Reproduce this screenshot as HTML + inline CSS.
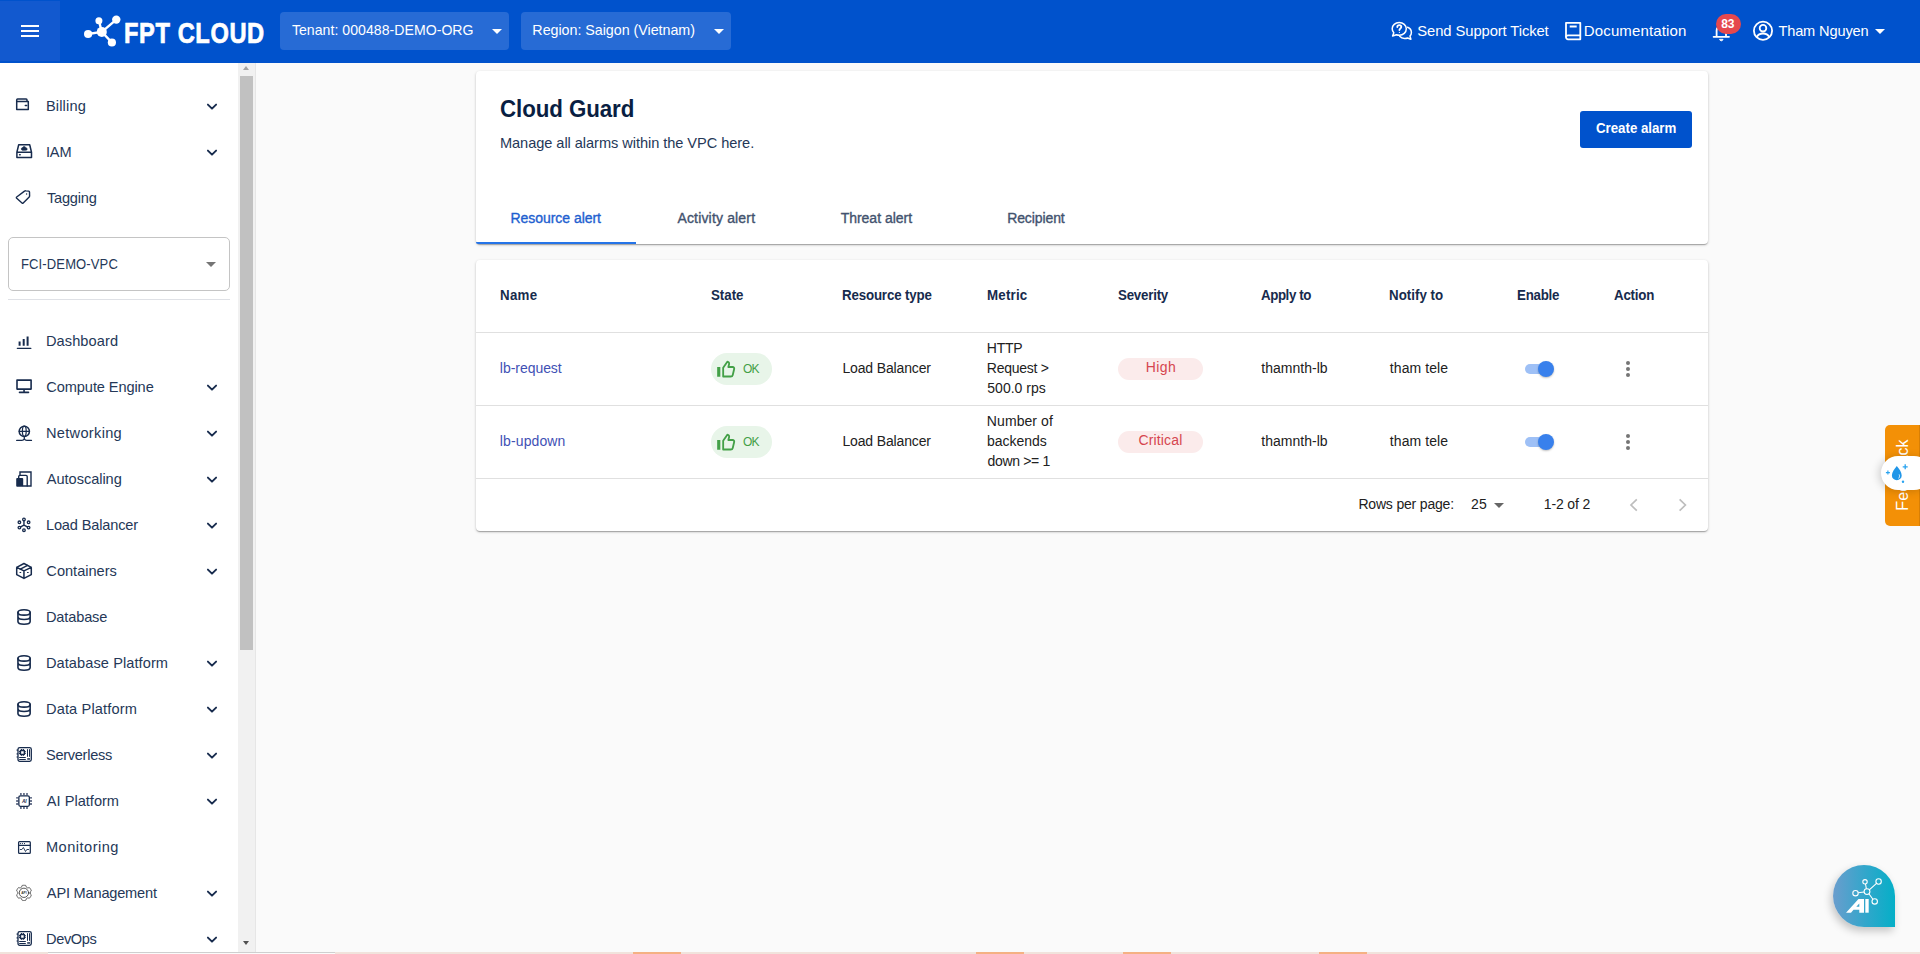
<!DOCTYPE html>
<html lang="en">
<head>
<meta charset="utf-8">
<title>Cloud Guard - FPT Cloud</title>
<style>
*{box-sizing:border-box;margin:0;padding:0}
html,body{width:1920px;height:954px;overflow:hidden;background:#fafafa;font-family:"Liberation Sans",sans-serif;color:#172b4d}
body{position:relative}
.abs{position:absolute}
.t{position:absolute;white-space:nowrap}
/* header */
#hdr{position:absolute;left:0;top:0;width:1920px;height:63px;background:#0052cc;color:#fff}
#burger{position:absolute;left:0;top:1px;width:60px;height:60px;background:#1259cf}
#burger i{position:absolute;left:21px;width:18px;height:2px;background:#fff}
.hsel{position:absolute;top:12px;height:38px;background:#276bd5;border-radius:4px}
.tri{position:absolute;width:0;height:0;border-left:5px solid transparent;border-right:5px solid transparent;border-top:5px solid #fff}
.ht{top:18px;line-height:24px;font-size:14.6px;color:#fff}
/* sidebar */
#side{position:absolute;left:0;top:63px;width:238px;height:891px;background:#fff}
.st{left:46px;font-size:14.6px;line-height:24px;color:#253858}
svg.ic{position:absolute;left:12px;width:24px;height:24px;fill:none;stroke:#172b4d;stroke-width:1.6;stroke-linecap:round;stroke-linejoin:round}
svg.ch{position:absolute;left:205px;width:14px;height:10px;fill:none;stroke:#172b4d;stroke-width:1.9;stroke-linecap:round;stroke-linejoin:round}
#sbar{position:absolute;left:238px;top:63px;width:17px;height:891px;background:#f1f1f1}
#sbar .th{position:absolute;left:2px;top:13px;width:13px;height:574px;background:#c1c1c1}
#sbar .up{position:absolute;left:4.9px;top:3px;width:0;height:0;border-left:3.6px solid transparent;border-right:3.6px solid transparent;border-bottom:4px solid #a3a3a3}
#sbar .dn{position:absolute;left:4.9px;bottom:9px;width:0;height:0;border-left:3.6px solid transparent;border-right:3.6px solid transparent;border-top:4.2px solid #505050}
/* cards */
.card{position:absolute;left:476px;width:1232px;background:#fff;border-radius:4px;box-shadow:0 1px 3px rgba(0,0,0,.2),0 1px 1px rgba(0,0,0,.14),0 2px 1px -1px rgba(0,0,0,.12)}
.tab{font-size:14px;line-height:20px;color:#42526e;-webkit-text-stroke:.35px #42526e}
.hd{font-size:14px;font-weight:bold;color:#172b4d;line-height:20px;transform:scaleX(.95);transform-origin:0 50%}
.c{font-size:14px;color:#212121;line-height:20px}
.lk{color:#3f51b5}
.ok{position:absolute;left:711px;width:61px;height:32px;border-radius:16px;background:#e8f5e9}
.ok svg{position:absolute;left:5px;top:6px;width:20px;height:20px}
.okt{font-size:12px;line-height:20px;color:#43a047}
.sev{position:absolute;left:1118px;width:85px;height:22px;border-radius:11px;background:#fbebeb}
.sevt{font-size:14px;line-height:20px;color:#d6454f}
.sw{position:absolute;left:1525px;width:28px;height:10px;border-radius:5px;background:#9ec0f6}
.sw i{position:absolute;left:13px;top:-3.5px;width:16.2px;height:16.2px;border-radius:9px;background:#3880ec;box-shadow:0 1px 2px rgba(0,0,0,.25)}
.dots{position:absolute;left:1626px;width:4px}
.dots i{display:block;width:4px;height:4px;border-radius:2px;background:#757575;margin-bottom:2.2px}
.line{position:absolute;left:476px;width:1232px;height:1px;background:#e0e0e0}
#hlogo{left:124.12px;letter-spacing:0.743px}
#htenant{left:291.88px;letter-spacing:0.033px}
#hregion{left:532.35px;letter-spacing:-0.037px}
#hsupport{left:1417.37px;letter-spacing:-0.106px}
#hdoc{left:1583.82px;letter-spacing:0.131px}
#hbadge{left:1721.20px;letter-spacing:0.000px}
#huser{left:1778.39px;letter-spacing:-0.137px}
#s0{left:45.94px;letter-spacing:0.152px}
#s1{left:45.89px;letter-spacing:-0.141px}
#s2{left:46.88px;letter-spacing:-0.202px}
#s3{left:45.94px;letter-spacing:0.092px}
#s4{left:46.35px;letter-spacing:-0.101px}
#s5{left:45.94px;letter-spacing:0.310px}
#s6{left:46.87px;letter-spacing:-0.054px}
#s7{left:45.94px;letter-spacing:-0.162px}
#s8{left:46.35px;letter-spacing:-0.003px}
#s9{left:45.94px;letter-spacing:-0.147px}
#s10{left:45.94px;letter-spacing:0.074px}
#s11{left:45.94px;letter-spacing:0.151px}
#s12{left:45.97px;letter-spacing:-0.294px}
#s13{left:46.87px;letter-spacing:-0.001px}
#s14{left:45.94px;letter-spacing:0.481px}
#s15{left:46.87px;letter-spacing:-0.206px}
#s16{left:45.94px;letter-spacing:-0.347px}
#svpc{left:21.32px;letter-spacing:0.132px}
#mtitle{left:499.59px;letter-spacing:-0.087px}
#msub{left:499.94px;letter-spacing:-0.055px}
#mbtn{left:1595.60px;letter-spacing:-0.025px}
#tab0{left:510.39px;letter-spacing:-0.033px}
#tab1{left:677.46px;letter-spacing:0.163px}
#tab2{left:840.64px;letter-spacing:-0.012px}
#tab3{left:1007.18px;letter-spacing:-0.100px}
#th0{left:500.06px;letter-spacing:0.317px}
#th1{left:711.46px;letter-spacing:-0.014px}
#th2{left:842.41px;letter-spacing:-0.164px}
#th3{left:987.41px;letter-spacing:0.221px}
#th4{left:1118.46px;letter-spacing:-0.226px}
#th5{left:1260.53px;letter-spacing:-0.437px}
#th6{left:1389.41px;letter-spacing:0.036px}
#th7{left:1517.41px;letter-spacing:-0.254px}
#th8{left:1613.53px;letter-spacing:-0.205px}
#r0n{left:499.85px;letter-spacing:-0.042px}
#r0ok{left:742.93px;letter-spacing:-0.802px}
#r0t{left:842.39px;letter-spacing:-0.136px}
#r0m0{left:986.87px;letter-spacing:-0.266px}
#r0m1{left:986.87px;letter-spacing:-0.256px}
#r0m2{left:987.31px;letter-spacing:0.017px}
#r0s{left:1145.87px;letter-spacing:0.344px}
#r0a{left:1261.36px;letter-spacing:0.004px}
#r0y{left:1389.87px;letter-spacing:0.063px}
#r1n{left:499.85px;letter-spacing:0.117px}
#r1ok{left:742.93px;letter-spacing:-0.802px}
#r1t{left:842.39px;letter-spacing:-0.136px}
#r1m0{left:986.87px;letter-spacing:0.076px}
#r1m1{left:987.11px;letter-spacing:-0.033px}
#r1m2{left:987.60px;letter-spacing:-0.344px}
#r1s{left:1138.41px;letter-spacing:0.155px}
#r1a{left:1261.36px;letter-spacing:0.004px}
#r1y{left:1389.87px;letter-spacing:0.063px}
#f0{left:1358.42px;letter-spacing:-0.183px}
#f1{left:1471.11px;letter-spacing:-0.003px}
#f2{left:1543.87px;letter-spacing:-0.166px}
</style>
</head>
<body>
<div id="hdr">
<div id="burger"><i style="top:24px"></i><i style="top:29px"></i><i style="top:34px"></i></div>
<svg class="abs" style="left:80px;top:10px" width="44" height="42" viewBox="0 0 44 42">
<g stroke="#fff" stroke-width="2.400" fill="none" stroke-linecap="round"><path d="M8.100 24 L21.800 21.900 M21.800 21.900 L18.900 10.800 M21.800 21.900 L36.300 9.600 M21.800 21.900 L31.900 32.500"/></g>
<g fill="#fff"><circle cx="8.100" cy="24" r="4.100"/><circle cx="21.800" cy="21.900" r="5"/><circle cx="18.900" cy="10.800" r="3.500"/><circle cx="36.300" cy="9.600" r="4.200"/><circle cx="31.900" cy="32.500" r="4.100"/></g>
</svg>
<div class="t " id="hlogo" style="top:14.9px;line-height:36px;font-size:29.6px;font-weight:bold;color:#fff;-webkit-text-stroke:.7px #fff;transform:scaleX(.8);transform-origin:0 50%">FPT CLOUD</div>
<div class="hsel" style="left:280px;width:229px"></div><div class="tri" style="left:492px;top:29px"></div>
<div class="hsel" style="left:521px;width:210px"></div><div class="tri" style="left:714px;top:29px"></div>
<div class="t ht" id="htenant" style="top:18px;line-height:24px;font-size:14.1px">Tenant: 000488-DEMO-ORG</div>
<div class="t ht" id="hregion" style="top:18px;line-height:24px;font-size:14.3px">Region: Saigon (Vietnam)</div>
<svg class="abs" style="left:1389px;top:19px" width="26" height="24" viewBox="0 0 26 24" fill="none" stroke="#fff" stroke-width="1.5" stroke-linecap="round" stroke-linejoin="round">
<path d="M10.2 3.6 c-4 0 -7 2.7 -7 6.1 c0 1.5 .6 2.9 1.600 4 l-1.2 3.300 l3.800 -1.300 c.9 .3 1.800 .5 2.800 .5 c4 0 7.100 -2.800 7.100 -6.400 c0 -3.500 -3.100 -6.200 -7.100 -6.200z"/>
<path d="M18.6 8.300 c2.300 .9 3.800 2.900 3.800 5.200 c0 1.400 -.5 2.600 -1.400 3.600 l.9 3.100 l-3.300 -1.200 c-1 .4 -2 .6 -3.100 .5 c-2 -.1 -3.700 -1 -4.800 -2.300"/>
<path d="M8.300 8.100 c0 -1.100 .9 -1.900 2 -1.900 s2 .8 2 1.900 c0 1.300 -1.900 1.500 -1.900 3" stroke-width="1.800"/><circle cx="10.4" cy="13.300" r=".6" fill="#fff" stroke="none"/>
</svg>
<div class="t ht" id="hsupport" style="top:18.6px;line-height:24px;font-size:14.8px">Send Support Ticket</div>
<svg class="abs" style="left:1563px;top:20px" width="20" height="22" viewBox="0 0 20 22" fill="none" stroke="#fff" stroke-width="1.8" stroke-linejoin="round">
<path d="M3 2.800 h14.300 v16.500 h-12.300 a2 2 0 0 1 -2 -2z"/><path d="M3 17.300 a2 2 0 0 1 2 -2 h12.300" /><path d="M6.700 6.500 h7" stroke-width="2"/></svg>
<div class="t ht" id="hdoc" style="top:18.6px;line-height:24px;font-size:15px">Documentation</div>
<svg class="abs" style="left:1711px;top:21px" width="22" height="22" viewBox="0 0 22 22" fill="none" stroke="#fff" stroke-width="1.8" stroke-linejoin="round" stroke-linecap="round">
<path d="M5.600 15.500 V9.500 a4.700 4.700 0 0 1 9.400 0 V15.500 M2.600 15.800 H18"/><path d="M8.700 18.700 a1.700 1.700 0 0 0 3.200 0z" fill="#fff" stroke-width="1"/></svg>
<div class="abs" style="left:1715.5px;top:14px;width:25px;height:20px;border-radius:10px;background:#e5484d"></div>
<div class="t " id="hbadge" style="top:14px;line-height:20px;font-size:12px;font-weight:bold;color:#fff">83</div>
<svg class="abs" style="left:1751px;top:19px" width="24" height="24" viewBox="0 0 24 24" fill="none" stroke="#fff" stroke-width="1.8">
<circle cx="12" cy="11.700" r="9.100"/><circle cx="12" cy="9.200" r="3.300"/><path d="M5.700 18.200 c1.300 -2.600 3.600 -3.700 6.300 -3.700 s5 1.100 6.300 3.700"/></svg>
<div class="t ht" id="huser" style="top:18.6px;line-height:24px;font-size:14.6px">Tham Nguyen</div>
<div class="tri" style="left:1875px;top:29px"></div>
</div>
<div id="side"></div>
<div id="sbar"><div class="up"></div><div class="th"></div><div class="dn"></div></div>
<div class="abs" style="left:255px;top:63px;width:1px;height:891px;background:#e6e6e6"></div>
<svg class="ic" style="top:94px" viewBox="0 0 24 24"><path d="M4.7 7.600 h11.600 v7.800 h-11.600z M4.700 7.600 v-1.700 q0 -.9 .9 -.9 h8.500 q.9 0 .9 .9 v1.700" stroke-width="1.500"/><path d="M13.300 11.500 h1.400" stroke-width="1.500"/></svg>
<div class="t st" id="s0" style="top:94px;line-height:24px">Billing</div>
<svg class="ch" style="top:101.6px" viewBox="0 0 14 10"><path d="M2.900 2.600 L7 6.700 L11.100 2.600"/></svg>
<svg class="ic" style="top:140px" viewBox="0 0 24 24"><path d="M6.700 4.800 h11 l1.800 7.400 v5.200 h-14.600 v-5.200z M5 12.200 h14.400" stroke-width="1.500"/><path d="M10.200 10.300 a1.400 1.400 0 0 1 .3 -2.700 a1.900 1.900 0 0 1 3.500 .3 a1.200 1.200 0 0 1 0 2.400z" fill="#172b4d" stroke-width=".6"/><path d="M7.600 14.800 h.6" stroke-width="1.400"/></svg>
<div class="t st" id="s1" style="top:140px;line-height:24px">IAM</div>
<svg class="ch" style="top:147.6px" viewBox="0 0 14 10"><path d="M2.900 2.600 L7 6.700 L11.100 2.600"/></svg>
<svg class="ic" style="top:186px" viewBox="0 0 24 24"><path d="M4.700 11 L12.500 5.100 q.5 -.4 1.200 -.3 l3 .3 q.8 .1 .8 .9 l.1 4 q0 .6 -.4 1 L11.200 17 q-.6 .6 -1.200 0 L4.700 12.300 q-.7 -.7 0 -1.300z" stroke-width="1.400"/><circle cx="14.600" cy="8" r=".7" fill="#172b4d" stroke="none"/></svg>
<div class="t st" id="s2" style="top:186px;line-height:24px">Tagging</div>
<svg class="ic" style="top:329px" viewBox="0 0 24 24"><path d="M7.600 12.500 V16.700 M11.700 10 V16.700 M15.600 7.400 V16.700" stroke-width="2" stroke-linecap="butt"/><path d="M5.300 19.300 H18.900" stroke-width="1.200"/></svg>
<div class="t st" id="s3" style="top:329px;line-height:24px">Dashboard</div>
<svg class="ic" style="top:375px" viewBox="0 0 24 24"><path d="M5 5.100 h14.100 v9 h-14.100z M12.050 14.100 v3.100 M7.500 17.400 h9" stroke-width="1.600"/></svg>
<div class="t st" id="s4" style="top:375px;line-height:24px">Compute Engine</div>
<svg class="ch" style="top:382.6px" viewBox="0 0 14 10"><path d="M2.900 2.600 L7 6.700 L11.100 2.600"/></svg>
<svg class="ic" style="top:421px" viewBox="0 0 24 24"><circle cx="12.300" cy="10.300" r="5.150" stroke-width="1.500"/><ellipse cx="12.300" cy="10.300" rx="1.900" ry="5.100" stroke-width="1.250"/><path d="M7.200 10.300 h10.200" stroke-width="1.250"/><path d="M12.300 15.700 V17.700 M4.700 19.450 H9.800 Q11.600 19.450 12.300 17.700 Q13 19.450 14.800 19.450 H19.500" stroke-width="1.300"/></svg>
<div class="t st" id="s5" style="top:421px;line-height:24px">Networking</div>
<svg class="ch" style="top:428.6px" viewBox="0 0 14 10"><path d="M2.900 2.600 L7 6.700 L11.100 2.600"/></svg>
<svg class="ic" style="top:467px" viewBox="0 0 24 24"><rect x="4.200" y="11" width="7" height="8.700" rx=".9" fill="#172b4d" stroke="none"/><path d="M8 7.900 V5 H19 V19 H11" stroke-width="1.400" stroke-linejoin="miter"/><path d="M6.700 11 V9.600 Q6.700 8.400 7.900 8.400 H14 Q15.200 8.400 15.200 9.600 V19" stroke-width="1.400"/></svg>
<div class="t st" id="s6" style="top:467px;line-height:24px">Autoscaling</div>
<svg class="ch" style="top:474.6px" viewBox="0 0 14 10"><path d="M2.900 2.600 L7 6.700 L11.100 2.600"/></svg>
<svg class="ic" style="top:513px" viewBox="0 0 24 24"><g stroke-width="1.300"><circle cx="11.950" cy="6.500" r="1.300"/><circle cx="11.950" cy="17.200" r="1.300"/><circle cx="7.400" cy="9.300" r="1.300"/><circle cx="16.600" cy="9.300" r="1.300"/><circle cx="7.400" cy="14.600" r="1.300"/><circle cx="16.600" cy="14.600" r="1.300"/><path d="M11.950 7.900 V12.100 M11.950 12.100 L8.600 13.900 M11.950 12.100 L15.300 13.900" stroke-width="1.400"/></g></svg>
<div class="t st" id="s7" style="top:513px;line-height:24px">Load Balancer</div>
<svg class="ch" style="top:520.6px" viewBox="0 0 14 10"><path d="M2.900 2.600 L7 6.700 L11.100 2.600"/></svg>
<svg class="ic" style="top:559px" viewBox="0 0 24 24"><path d="M11.950 4.500 L19.300 8.300 V15.600 L11.950 19.400 L4.700 15.600 V8.300z M4.700 8.300 L11.950 11.900 L19.300 8.300 M11.950 11.900 V19.400" stroke-width="1.500"/><path d="M15.600 6.400 L8.300 10.100" stroke-width="1.400"/><path d="M8 13.500 h.7 M15.500 13.500 h.7" stroke-width="1.200"/></svg>
<div class="t st" id="s8" style="top:559px;line-height:24px">Containers</div>
<svg class="ch" style="top:566.6px" viewBox="0 0 14 10"><path d="M2.900 2.600 L7 6.700 L11.100 2.600"/></svg>
<svg class="ic" style="top:605px" viewBox="0 0 24 24"><ellipse cx="12.050" cy="7.400" rx="6.100" ry="2.700" stroke-width="1.600"/><path d="M5.950 7.400 V16.500 c0 1.500 2.700 2.700 6.100 2.700 s6.100 -1.200 6.100 -2.700 V7.400 M5.950 11.800 c0 1.500 2.700 2.700 6.100 2.700 s6.100 -1.200 6.100 -2.700" stroke-width="1.600"/></svg>
<div class="t st" id="s9" style="top:605px;line-height:24px">Database</div>
<svg class="ic" style="top:651px" viewBox="0 0 24 24"><ellipse cx="12.050" cy="7.400" rx="6.100" ry="2.700" stroke-width="1.600"/><path d="M5.950 7.400 V16.500 c0 1.500 2.700 2.700 6.100 2.700 s6.100 -1.200 6.100 -2.700 V7.400 M5.950 11.800 c0 1.500 2.700 2.700 6.100 2.700 s6.100 -1.200 6.100 -2.700" stroke-width="1.600"/></svg>
<div class="t st" id="s10" style="top:651px;line-height:24px">Database Platform</div>
<svg class="ch" style="top:658.6px" viewBox="0 0 14 10"><path d="M2.900 2.600 L7 6.700 L11.100 2.600"/></svg>
<svg class="ic" style="top:697px" viewBox="0 0 24 24"><ellipse cx="12.050" cy="7.400" rx="6.100" ry="2.700" stroke-width="1.600"/><path d="M5.950 7.400 V16.500 c0 1.500 2.700 2.700 6.100 2.700 s6.100 -1.200 6.100 -2.700 V7.400 M5.950 11.800 c0 1.500 2.700 2.700 6.100 2.700 s6.100 -1.200 6.100 -2.700" stroke-width="1.600"/></svg>
<div class="t st" id="s11" style="top:697px;line-height:24px">Data Platform</div>
<svg class="ch" style="top:704.6px" viewBox="0 0 14 10"><path d="M2.900 2.600 L7 6.700 L11.100 2.600"/></svg>
<svg class="ic" style="top:743px" viewBox="0 0 24 24"><rect x="6" y="4.600" width="13.300" height="13.700" rx="1.700" stroke-width="1.300"/><path d="M4.700 7.200 h1 M4.700 10.900 h1 M4.700 14 h1" stroke-width="1.700" stroke-linecap="butt"/><rect x="8.400" y="7.400" width="4" height="4" rx=".5" stroke-width="1.500"/><path d="M9.500 6.100 v1 M11.400 6.100 v1 M9.500 11.700 v1 M11.400 11.700 v1 M7.100 8.500 h1 M7.100 10.400 h1 M12.700 8.500 h1 M12.700 10.400 h1" stroke-width="1.100" stroke-linecap="butt"/><path d="M15.500 6.600 v6.800 M17.500 6.600 v6.800 M7.600 14.500 h5.800 M7.600 16.500 h5.800" stroke-width="1"/><path d="M15.200 15.950 h2.800" stroke-width="1.500" stroke-linecap="butt"/></svg>
<div class="t st" id="s12" style="top:743px;line-height:24px">Serverless</div>
<svg class="ch" style="top:750.6px" viewBox="0 0 14 10"><path d="M2.900 2.600 L7 6.700 L11.100 2.600"/></svg>
<svg class="ic" style="top:789px" viewBox="0 0 24 24"><rect x="6.850" y="6.850" width="10.500" height="10.500" rx="1.500" stroke-width="1.300"/><path d="M8.900 4.100 v2.100 M11.950 4.100 v2.100 M15 4.100 v2.100 M8.900 18 v2 M11.950 18 v2 M15 18 v2 M4.100 8.900 h2.100 M4.100 11.950 h2.100 M4.100 15 h2.100 M18 8.900 h2 M18 11.950 h2 M18 15 h2" stroke-width="1.400" stroke-linecap="butt" stroke="#3d4a6b"/><text x="12.300" y="13.800" font-size="4.800" font-weight="bold" font-style="italic" text-anchor="middle" fill="#172b4d" stroke="none" font-family="Liberation Sans, sans-serif">AI</text></svg>
<div class="t st" id="s13" style="top:789px;line-height:24px">AI Platform</div>
<svg class="ch" style="top:796.6px" viewBox="0 0 14 10"><path d="M2.900 2.600 L7 6.700 L11.100 2.600"/></svg>
<svg class="ic" style="top:835px" viewBox="0 0 24 24"><rect x="6.600" y="6.500" width="11.700" height="11.800" rx=".9" stroke-width="1.250"/><path d="M6.600 10.300 h11.700" stroke-width="1.200"/><path d="M8.300 8.550 h.2 M10.300 8.550 h.2 M12.400 8.550 h.2" stroke-width="1"/><path d="M8.300 14.500 h1.600 l1.500 -2 l2.100 4 l1.300 -2 h1.800" stroke-width=".9"/></svg>
<div class="t st" id="s14" style="top:835px;line-height:24px">Monitoring</div>
<svg class="ic" style="top:881px" viewBox="0 0 24 24"><g stroke="#3a3a3a" stroke-width=".85"><path d="M18.14 11.90 L18.14 11.68 L18.13 11.47 L18.13 11.25 L18.17 11.03 L18.36 10.77 L18.81 10.44 L19.17 10.10 L19.24 9.81 L19.19 9.55 L19.11 9.29 L19.01 9.05 L18.91 8.80 L18.80 8.56 L18.68 8.32 L18.55 8.09 L18.41 7.86 L18.27 7.64 L18.11 7.42 L17.95 7.21 L17.79 7.00 L17.61 6.81 L17.40 6.63 L17.12 6.55 L16.65 6.69 L16.14 6.91 L15.82 6.95 L15.60 6.87 L15.41 6.76 L15.23 6.65 L15.04 6.54 L14.86 6.44 L14.67 6.33 L14.48 6.22 L14.30 6.07 L14.18 5.78 L14.12 5.23 L14.00 4.75 L13.78 4.54 L13.53 4.45 L13.27 4.40 L13.01 4.35 L12.75 4.32 L12.48 4.30 L12.22 4.28 L11.95 4.28 L11.68 4.28 L11.42 4.30 L11.15 4.32 L10.89 4.35 L10.63 4.40 L10.37 4.45 L10.12 4.54 L9.90 4.75 L9.78 5.23 L9.72 5.78 L9.60 6.07 L9.42 6.22 L9.23 6.33 L9.04 6.44 L8.86 6.54 L8.67 6.65 L8.49 6.76 L8.30 6.87 L8.08 6.95 L7.76 6.91 L7.25 6.69 L6.78 6.55 L6.50 6.63 L6.29 6.81 L6.11 7.00 L5.95 7.21 L5.79 7.42 L5.63 7.64 L5.49 7.86 L5.35 8.09 L5.22 8.32 L5.10 8.56 L4.99 8.80 L4.89 9.05 L4.79 9.29 L4.71 9.55 L4.66 9.81 L4.73 10.10 L5.09 10.44 L5.54 10.77 L5.73 11.03 L5.77 11.25 L5.77 11.47 L5.76 11.68 L5.76 11.90 L5.76 12.12 L5.77 12.33 L5.77 12.55 L5.73 12.77 L5.54 13.03 L5.09 13.36 L4.73 13.70 L4.66 13.99 L4.71 14.25 L4.79 14.51 L4.89 14.75 L4.99 15.00 L5.10 15.24 L5.22 15.48 L5.35 15.71 L5.49 15.94 L5.63 16.16 L5.79 16.38 L5.95 16.59 L6.11 16.80 L6.29 16.99 L6.50 17.17 L6.78 17.25 L7.25 17.11 L7.76 16.89 L8.08 16.85 L8.30 16.93 L8.49 17.04 L8.67 17.15 L8.86 17.26 L9.04 17.36 L9.23 17.47 L9.42 17.58 L9.60 17.73 L9.72 18.02 L9.78 18.57 L9.90 19.05 L10.12 19.26 L10.37 19.35 L10.63 19.40 L10.89 19.45 L11.15 19.48 L11.42 19.50 L11.68 19.52 L11.95 19.52 L12.22 19.52 L12.48 19.50 L12.75 19.48 L13.01 19.45 L13.27 19.40 L13.53 19.35 L13.78 19.26 L14.00 19.05 L14.12 18.57 L14.18 18.02 L14.30 17.73 L14.48 17.58 L14.67 17.47 L14.86 17.36 L15.04 17.26 L15.23 17.15 L15.41 17.04 L15.60 16.93 L15.82 16.85 L16.14 16.89 L16.65 17.11 L17.12 17.25 L17.40 17.17 L17.61 16.99 L17.79 16.80 L17.95 16.59 L18.11 16.38 L18.27 16.16 L18.41 15.94 L18.55 15.71 L18.68 15.48 L18.80 15.24 L18.91 15.00 L19.01 14.75 L19.11 14.51 L19.19 14.25 L19.24 13.99 L19.17 13.70 L18.81 13.36 L18.36 13.03 L18.17 12.77 L18.13 12.55 L18.13 12.33 L18.14 12.12z" stroke-linejoin="round"/><circle cx="11.950" cy="11.800" r="4.650"/></g><text x="11.950" y="12.800" font-size="3.200" font-weight="bold" text-anchor="middle" fill="#333" stroke="none" font-family="Liberation Sans, sans-serif">API</text></svg>
<div class="t st" id="s15" style="top:881px;line-height:24px">API Management</div>
<svg class="ch" style="top:888.6px" viewBox="0 0 14 10"><path d="M2.900 2.600 L7 6.700 L11.100 2.600"/></svg>
<svg class="ic" style="top:927px" viewBox="0 0 24 24"><rect x="6" y="4.600" width="13.300" height="13.700" rx="1.700" stroke-width="1.300"/><path d="M4.700 7.200 h1 M4.700 10.900 h1 M4.700 14 h1" stroke-width="1.700" stroke-linecap="butt"/><rect x="8.400" y="7.400" width="4" height="4" rx=".5" stroke-width="1.500"/><path d="M9.500 6.100 v1 M11.400 6.100 v1 M9.500 11.700 v1 M11.400 11.700 v1 M7.100 8.500 h1 M7.100 10.400 h1 M12.700 8.500 h1 M12.700 10.400 h1" stroke-width="1.100" stroke-linecap="butt"/><path d="M15.500 6.600 v6.800 M17.500 6.600 v6.800 M7.600 14.500 h5.800 M7.600 16.500 h5.800" stroke-width="1"/><path d="M15.200 15.950 h2.800" stroke-width="1.500" stroke-linecap="butt"/></svg>
<div class="t st" id="s16" style="top:927px;line-height:24px">DevOps</div>
<svg class="ch" style="top:934.6px" viewBox="0 0 14 10"><path d="M2.900 2.600 L7 6.700 L11.100 2.600"/></svg>
<div class="abs" style="left:8px;top:237px;width:222px;height:54px;border:1px solid #c4c4c4;border-radius:5px;background:#fff"></div>
<div class="t st" id="svpc" style="top:252px;line-height:24px;font-size:14px;transform:scaleX(.93);transform-origin:0 50%">FCI-DEMO-VPC</div>
<div class="tri" style="left:206px;top:262px;border-top-color:#757575"></div>
<div class="abs" style="left:8px;top:299px;width:222px;height:1px;background:#dfe1e6"></div>
<div class="card" style="top:71px;height:173px"></div>
<div class="t " id="mtitle" style="top:93.4px;line-height:32px;font-size:24px;font-weight:bold;color:#091e42;transform:scaleX(.93);transform-origin:0 50%">Cloud Guard</div>
<div class="t " id="msub" style="top:130.6px;line-height:24px;font-size:14.6px;color:#253858">Manage all alarms within the VPC here.</div>
<div class="abs" style="left:1580px;top:111px;width:112px;height:37px;border-radius:3px;background:#0052cc"></div>
<div class="t " id="mbtn" style="top:118px;line-height:20px;font-size:14px;font-weight:bold;color:#fff;transform:scaleX(.95);transform-origin:0 50%">Create alarm</div>
<div class="t tab" id="tab0" style="top:208px;line-height:20px;color:#1e5fd0;-webkit-text-stroke:.35px #1e5fd0">Resource alert</div>
<div class="t tab" id="tab1" style="top:208px;line-height:20px">Activity alert</div>
<div class="t tab" id="tab2" style="top:208px;line-height:20px">Threat alert</div>
<div class="t tab" id="tab3" style="top:208px;line-height:20px">Recipient</div>
<div class="abs" style="left:476px;top:242px;width:160px;height:2px;background:#2574e8;border-radius:0 0 0 3px"></div>
<div class="card" style="top:260px;height:271px"></div>
<div class="t hd" id="th0" style="top:285px;line-height:20px">Name</div>
<div class="t hd" id="th1" style="top:285px;line-height:20px">State</div>
<div class="t hd" id="th2" style="top:285px;line-height:20px">Resource type</div>
<div class="t hd" id="th3" style="top:285px;line-height:20px">Metric</div>
<div class="t hd" id="th4" style="top:285px;line-height:20px">Severity</div>
<div class="t hd" id="th5" style="top:285px;line-height:20px">Apply to</div>
<div class="t hd" id="th6" style="top:285px;line-height:20px">Notify to</div>
<div class="t hd" id="th7" style="top:285px;line-height:20px">Enable</div>
<div class="t hd" id="th8" style="top:285px;line-height:20px">Action</div>
<div class="line" style="top:332px"></div>
<div class="line" style="top:405px"></div>
<div class="line" style="top:478px"></div>
<div class="t c lk" id="r0n" style="top:357.5px;line-height:20px">lb-request</div>
<div class="ok" style="top:352.5px"><svg viewBox="0 0 24 24" fill="none" stroke="#43a047" stroke-width="2.2" stroke-linejoin="round"><path d="M8.600 21 V10.400 L13.600 3.200 c1.700 .2 2.500 1.600 2.100 3.100 l-.9 3.300 h5.200 c1.300 0 2.100 1.100 1.800 2.300 l-1.700 7.200 c-.3 1.200 -1.200 1.900 -2.400 1.900z"/><path d="M3.300 9.600 V21.300" stroke-width="3.800" stroke-linecap="butt"/></svg></div>
<div class="t okt" id="r0ok" style="top:359.3px;line-height:20px">OK</div>
<div class="t c" id="r0t" style="top:357.5px;line-height:20px">Load Balancer</div>
<div class="t c" id="r0m0" style="top:337.5px;line-height:20px">HTTP</div>
<div class="t c" id="r0m1" style="top:357.5px;line-height:20px">Request &gt;</div>
<div class="t c" id="r0m2" style="top:377.5px;line-height:20px">500.0 rps</div>
<div class="sev" style="top:357.5px"></div>
<div class="t sevt" id="r0s" style="top:356.7px;line-height:20px">High</div>
<div class="t c" id="r0a" style="top:357.5px;line-height:20px">thamnth-lb</div>
<div class="t c" id="r0y" style="top:357.5px;line-height:20px">tham tele</div>
<div class="sw" style="top:364.0px"><i></i></div>
<div class="dots" style="top:360.5px"><i></i><i></i><i></i></div>
<div class="t c lk" id="r1n" style="top:430.5px;line-height:20px">lb-updown</div>
<div class="ok" style="top:425.5px"><svg viewBox="0 0 24 24" fill="none" stroke="#43a047" stroke-width="2.2" stroke-linejoin="round"><path d="M8.600 21 V10.400 L13.600 3.200 c1.700 .2 2.500 1.600 2.100 3.100 l-.9 3.300 h5.200 c1.300 0 2.100 1.100 1.800 2.300 l-1.700 7.200 c-.3 1.200 -1.200 1.900 -2.400 1.900z"/><path d="M3.300 9.600 V21.300" stroke-width="3.800" stroke-linecap="butt"/></svg></div>
<div class="t okt" id="r1ok" style="top:432.3px;line-height:20px">OK</div>
<div class="t c" id="r1t" style="top:430.5px;line-height:20px">Load Balancer</div>
<div class="t c" id="r1m0" style="top:410.5px;line-height:20px">Number of</div>
<div class="t c" id="r1m1" style="top:430.5px;line-height:20px">backends</div>
<div class="t c" id="r1m2" style="top:450.5px;line-height:20px">down &gt;= 1</div>
<div class="sev" style="top:430.5px"></div>
<div class="t sevt" id="r1s" style="top:429.7px;line-height:20px">Critical</div>
<div class="t c" id="r1a" style="top:430.5px;line-height:20px">thamnth-lb</div>
<div class="t c" id="r1y" style="top:430.5px;line-height:20px">tham tele</div>
<div class="sw" style="top:437.0px"><i></i></div>
<div class="dots" style="top:433.5px"><i></i><i></i><i></i></div>
<div class="t c" id="f0" style="top:494.3px;line-height:20px">Rows per page:</div>
<div class="t c" id="f1" style="top:494.3px;line-height:20px">25</div>
<div class="tri" style="left:1494px;top:503px;border-top-color:#666"></div>
<div class="t c" id="f2" style="top:494.3px;line-height:20px">1-2 of 2</div>
<svg class="abs" style="left:1626px;top:497px" width="16" height="16" viewBox="0 0 16 16" fill="none" stroke="#bdbdbd" stroke-width="1.700"><path d="M10.800 2.300 L5 8 L10.800 13.700"/></svg>
<svg class="abs" style="left:1674px;top:497px" width="16" height="16" viewBox="0 0 16 16" fill="none" stroke="#bdbdbd" stroke-width="1.700"><path d="M5.600 2.300 L11.400 8 L5.600 13.700"/></svg>
<div class="abs" style="left:1884.500px;top:425px;width:36px;height:101px;border-radius:5px 0 0 5px;background:#f39006"></div>
<div class="abs" style="left:1919px;top:425px;width:1px;height:101px;background:#d97f04"></div>
<div class="abs" id="fb" style="left:1885px;top:425px;width:35px;height:101px;overflow:hidden"><div style="position:absolute;left:-32px;top:36.500px;width:100px;height:26px;line-height:26px;text-align:center;transform:rotate(-90deg);font-size:16px;color:#fff;letter-spacing:.15px">Feedback</div></div>
<div class="abs" style="left:1881px;top:456px;width:50px;height:34px;border-radius:17px;background:#fff;box-shadow:-2px 1px 8px rgba(0,0,0,.18)"></div>
<svg class="abs" style="left:1884px;top:460px" width="28" height="28" viewBox="0 0 28 28"><path d="M12.800 6 c2.400 3.300 4.900 5.900 4.900 9.400 a4.900 4.900 0 0 1 -9.800 0 c0 -3.500 2.600 -6.100 4.900 -9.400z" fill="#2196e8"/><path d="M15.200 14.500 c.6 1.500 .3 2.900 -.6 3.900" stroke="#fff" stroke-width=".9" fill="none"/>
<path d="M21.200 4.300 v5 M18.700 6.800 h5" stroke="#29a3f0" stroke-width="1.300"/><path d="M3.900 10.600 v4 M1.900 12.600 h4" stroke="#29a3f0" stroke-width="1.100"/><circle cx="19" cy="21.700" r="1.200" fill="#29a3f0"/></svg>
<div class="abs" style="left:1833px;top:865px;width:62px;height:62px;border-radius:31px 31px 0 31px;background:linear-gradient(90deg,#6a9dcd 0%,#2fa7cb 55%,#05afc7 100%);box-shadow:-2px 4px 9px rgba(0,0,0,.22)"></div>
<svg class="abs" style="left:1833px;top:865px" width="62" height="62" viewBox="0 0 62 62" fill="none" stroke="#fff" stroke-width="1.100">
<circle cx="34" cy="26.600" r="2.900"/><circle cx="32" cy="16.800" r="2.200"/><circle cx="45.600" cy="16.500" r="2.700"/><circle cx="22.500" cy="28.200" r="2.700"/><circle cx="41.700" cy="36.400" r="2.700"/>
<path d="M33.400 23.800 L32.500 19 M36.300 24.800 L43.500 18.300 M31.100 27 L25.200 27.800 M35.900 28.800 L39.900 34.300"/>
<path d="M13 47.700 L25.500 34 h5.500 v13.700 h-4.700 v-2.900 h-5.800 l-2.500 2.900z M23.300 41.800 h3 v-3.400z" fill="#fff" stroke="none" fill-rule="evenodd"/><path d="M32.300 34 h3.400 v13.700 h-3.400z" fill="#fff" stroke="none"/></svg>
<div class="abs" style="left:0;top:952px;width:1920px;height:2px;background:#f1e3dc"></div>
<div class="abs" style="left:48px;top:952px;width:287px;height:2px;background:#fbfbfb;border-top:1px solid #cfcfcf"></div>
<div class="abs" style="left:633px;top:952px;width:48px;height:2px;background:#f5b183"></div>
<div class="abs" style="left:976px;top:952px;width:48px;height:2px;background:#f5b183"></div>
<div class="abs" style="left:1123px;top:952px;width:48px;height:2px;background:#f5b183"></div>
<div class="abs" style="left:1319px;top:952px;width:48px;height:2px;background:#f5b183"></div>
</body>
</html>
